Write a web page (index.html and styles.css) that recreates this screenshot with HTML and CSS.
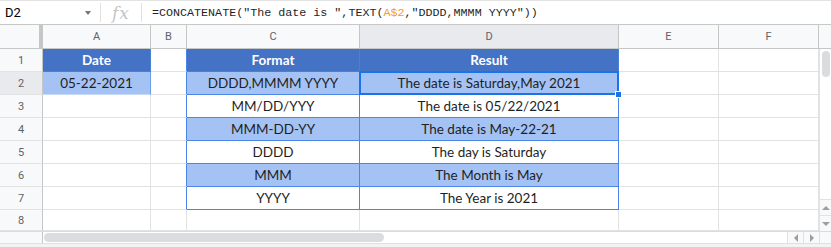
FILE: index.html
```html
<!DOCTYPE html>
<html>
<head>
<meta charset="utf-8">
<link rel="stylesheet" href="styles.css">
</head>
<body>
<div class="app">
  <div class="fbar">
    <div class="namebox"><span class="nb-text">D2</span><span class="nb-arrow"></span></div>
    <div class="sep"></div>
    <div class="fx">fx</div>
    <div class="sep"></div>
    <div class="formula">=CONCATENATE("The date is ",TEXT(<span class="ref">A$2</span>,"DDDD,MMMM YYYY"))</div>
  </div>
  <div class="sheet">
    <div class="corner"></div>
    <div class="ch">A</div><div class="ch">B</div><div class="ch">C</div><div class="ch sel">D</div><div class="ch">E</div><div class="ch">F</div><div class="ch vs-top"></div>

    <div class="rh">1</div>
    <div class="c hd">Date</div><div class="c bl"></div><div class="c hd">Format</div><div class="c hd">Result</div><div class="c"></div><div class="c"></div>
    <div class="vscroll"><div class="vthumb"></div></div>

    <div class="rh sel">2</div>
    <div class="c lb a2">05-22-2021</div><div class="c bl"></div><div class="c lb t">DDDD,MMMM YYYY</div><div class="c lb t active">The date is Saturday,May 2021<span class="handle"></span></div><div class="c"></div><div class="c"></div>

    <div class="rh">3</div>
    <div class="c"></div><div class="c bl"></div><div class="c t">MM/DD/YYY</div><div class="c t">The date is 05/22/2021</div><div class="c"></div><div class="c"></div>

    <div class="rh">4</div>
    <div class="c"></div><div class="c bl"></div><div class="c lb t">MMM-DD-YY</div><div class="c lb t">The date is May-22-21</div><div class="c"></div><div class="c"></div>

    <div class="rh">5</div>
    <div class="c"></div><div class="c bl"></div><div class="c t">DDDD</div><div class="c t">The day is Saturday</div><div class="c"></div><div class="c"></div>

    <div class="rh">6</div>
    <div class="c"></div><div class="c bl"></div><div class="c lb t">MMM</div><div class="c lb t">The Month is May</div><div class="c"></div><div class="c"></div>
    <div class="vbtns"><div class="vbtn"><span class="tri up"></span></div><div class="vbtn"><span class="tri down"></span></div></div>

    <div class="rh">7</div>
    <div class="c"></div><div class="c bl"></div><div class="c t">YYYY</div><div class="c t">The Year is 2021</div><div class="c"></div><div class="c"></div>

    <div class="rh">8</div>
    <div class="c"></div><div class="c"></div><div class="c"></div><div class="c"></div><div class="c"></div><div class="c"></div>
  </div>
  <div class="hscroll">
    <div class="hs-left"></div>
    <div class="hs-track"><div class="hthumb"></div></div>
    <div class="hbtn"><span class="tri left"></span></div>
    <div class="hbtn"><span class="tri right"></span></div>
    <div class="hs-corner"></div>
  </div>
  <div class="tabs"></div>
</div>
</body>
</html>
```

FILE: styles.css
```css
* { box-sizing: border-box; }
html, body { margin: 0; padding: 0; background: #fff; }
.app { width: 831px; height: 247px; overflow: hidden; font-family: Roboto, "Liberation Sans", sans-serif; }

.fbar {
  height: 25px;
  display: flex;
  align-items: center;
  border-top: 1px solid #e3e3e3;
  border-bottom: 1px solid #c7c7c7;
}
.namebox { width: 100px; height: 100%; display: flex; align-items: center; padding-left: 5px; }
.nb-text { font-size: 13px; color: #000; flex: 1; }
.nb-arrow {
  width: 0; height: 0; margin-right: 9px;
  border-left: 3.5px solid transparent; border-right: 3.5px solid transparent;
  border-top: 4px solid #757575;
}
.sep { width: 1px; height: 19px; background: #e0e0e0; }
.fx {
  width: 40px; text-align: center;
  font-family: "DejaVu Serif", "Liberation Serif", serif; font-style: italic;
  font-size: 17px; color: #c5c5c5; letter-spacing: 1px;
}
.formula {
  padding-left: 10px;
  font-family: "Liberation Mono", monospace; font-size: 11.7px; color: #1f1f1f;
  white-space: pre;
}
.formula .ref { color: #f39c2b; }

.sheet {
  display: grid;
  grid-template-columns: 43px 108px 36px 173px 259px 100px 100px 12px;
  grid-template-rows: 24px repeat(7, 23px) 21px;
}
.corner {
  background: #f8f9fa;
  border-right: 4px solid #c4c7c5;
  border-bottom: 1px solid #c4c7c5;
}
.ch {
  background: #f8f9fa;
  border-right: 1px solid #c4c7c5;
  border-bottom: 1px solid #c4c7c5;
  font-size: 11px; color: #5f6368;
  display: flex; align-items: center; justify-content: center;
}
.ch.sel, .rh.sel { background: #e8eaed; }
.ch.vs-top { border-right: none; }
.rh {
  background: #f8f9fa;
  border-right: 1px solid #c4c7c5;
  border-bottom: 1px solid #e2e2e2;
  font-size: 11px; color: #5f6368;
  display: flex; align-items: center; justify-content: center;
}
.c {
  border-right: 1px solid #e2e2e2;
  border-bottom: 1px solid #e2e2e2;
  font-family: Lato, "Open Sans", sans-serif; font-size: 13.5px; color: #1f1f1f;
  display: flex; align-items: center; justify-content: center;
  white-space: nowrap;
  position: relative;
}
.c.hd {
  background: #4472c4; color: #fff; font-weight: 700;
  border-right-color: #4a7fd6; border-bottom-color: #4a7fd6;
}
.c.lb { background: #a4c2f4; }
.c.a2 { border-right-color: #6d9eeb; border-bottom-color: #c9daf8; }
.c.t { border-right-color: #4a86e8; border-bottom-color: #4a86e8; }
.c.bl { border-right-color: #4a86e8; }
.c.active::after {
  content: "";
  position: absolute;
  left: -1px; top: -1px; right: -1px; bottom: -1px;
  border: 2px solid #1a73e8;
  pointer-events: none;
}
.handle {
  position: absolute;
  right: -4px; bottom: -4px;
  width: 7px; height: 7px;
  background: #1a73e8;
  border: 1px solid #fff;
  z-index: 2;
}

.vscroll { grid-column: 8; grid-row: 2 / span 5; background: #fff; border-left: 1px solid #e2e2e2; position: relative; }
.vthumb { margin: 2px 0 0 2px; width: 8px; height: 26px; background: #dadce0; border-radius: 4px; }
.vbtns {
  grid-column: 8; grid-row: 7 / span 3;
  display: flex; flex-direction: column; justify-content: flex-end;
  background: #fff; border-left: 1px solid #e2e2e2;
}
.vbtn {
  height: 16px; background: #f8f9fa; border-top: 1px solid #e2e2e2;
  display: flex; align-items: center; justify-content: center;
}
.tri { width: 0; height: 0; display: block; }
.tri.up { border-left: 4px solid transparent; border-right: 4px solid transparent; border-bottom: 4px solid #9e9e9e; }
.tri.down { border-left: 4px solid transparent; border-right: 4px solid transparent; border-top: 4px solid #9e9e9e; }
.tri.left { border-top: 4px solid transparent; border-bottom: 4px solid transparent; border-right: 4px solid #9e9e9e; }
.tri.right { border-top: 4px solid transparent; border-bottom: 4px solid transparent; border-left: 4px solid #9e9e9e; }

.hscroll {
  height: 12px; display: flex;
  border-top: 1px solid #dadce0;
}
.hs-left { width: 43px; background: #f8f9fa; border-right: 1px solid #c4c7c5; }
.hs-track { flex: 1; background: #fff; padding: 1px 0 0 1px; }
.hthumb { width: 340px; height: 9px; background: #dadce0; border-radius: 5px; }
.hbtn {
  width: 16px; background: #f8f9fa; border-left: 1px solid #e2e2e2;
  display: flex; align-items: center; justify-content: center;
}
.hs-corner { width: 12px; background: #f8f9fa; border-left: 1px solid #e2e2e2; }
.tabs { height: 4px; background: #f1f3f4; border-top: 1px solid #e0e0e0; }
```
